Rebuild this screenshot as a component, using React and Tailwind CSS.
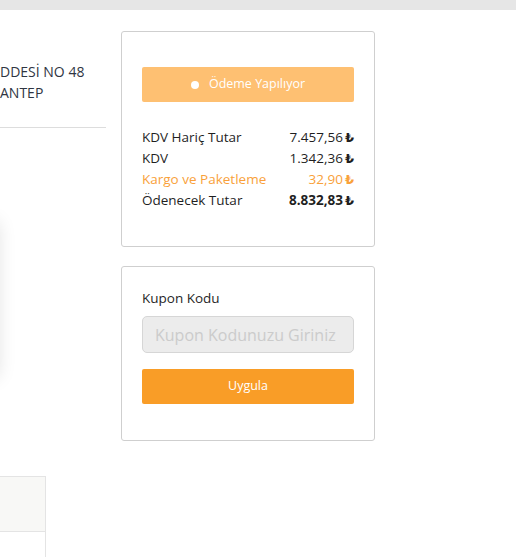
import React from 'react';

const rows = [
  { label: 'KDV Hariç Tutar', value: '7.457,56' },
  { label: 'KDV', value: '1.342,36' },
  { label: 'Kargo ve Paketleme', value: '32,90', accent: true },
  { label: 'Ödenecek Tutar', value: '8.832,83', strong: true },
];

export default function App() {
  return (
    <div className="w-[516px] h-[557px] overflow-hidden bg-white font-['Open_Sans',sans-serif] text-[#333]">
      <div className="h-[10px] bg-[#e6e6e6]" />
      <div className="flex">
        {/* left column (cut off) */}
        <div className="w-[106px] shrink-0 flex flex-col">
          <div className="pt-[51px] text-[14px] leading-[21px] text-[#2f3542] whitespace-nowrap">
            <div>DDESİ NO 48</div>
            <div>ANTEP</div>
          </div>
          <div className="mt-[24px] h-px bg-[#dddddd]" />
          <div className="mt-[94px] h-[155px] w-[200px] -ml-[203px] bg-white shadow-[0_0_18px_rgba(0,0,0,0.14)]" />
          <div className="mt-[99px] w-[46px] border-t border-r border-[#e4e4e4]">
            <div className="h-[55px] bg-[#f8f8f6] border-b border-[#e4e4e4]" />
            <div className="h-[30px]" />
          </div>
        </div>

        <div className="ml-[15px] w-[254px] shrink-0 flex flex-col gap-[19px] pt-[21px]">
          {/* summary */}
          <div className="h-[216px] border border-[#cfcfcf] rounded-[3px] px-[20px] pt-[35px]">
            <button className="w-full h-[35px] rounded-[2px] bg-[#fec072] text-white text-[12.5px] flex items-center justify-center gap-[10px]">
              <span className="w-[8px] h-[8px] rounded-full bg-white" />
              Ödeme Yapılıyor
            </button>
            <div className="mt-[25px] text-[13.5px] leading-[21px]">
              {rows.map((r) => (
                <div key={r.label} className={`h-[21px] flex items-center justify-between ${r.accent ? 'text-[#f9a13a]' : 'text-[#1f1f1f]'}`}>
                  <span>{r.label}</span>
                  <span className={`flex items-center ${r.strong ? 'font-bold' : ''}`}>
                    {r.value}
                    <span className="ml-[2px] font-bold font-['DejaVu_Sans',sans-serif] text-[13px] leading-none">₺</span>
                  </span>
                </div>
              ))}
            </div>
          </div>

          {/* coupon */}
          <div className="h-[175px] border border-[#cfcfcf] rounded-[3px] px-[20px] pt-[21px]">
            <div className="text-[13.5px] leading-[21px] text-[#1f1f1f]">Kupon Kodu</div>
            <input
              type="text"
              placeholder="Kupon Kodunuzu Giriniz"
              className="mt-[7px] w-full h-[37px] rounded-[5px] border border-[#d6d6d6] bg-[#ececec] px-[12px] text-[16px] outline-none placeholder:text-[#cbcbcb]"
            />
            <button className="mt-[16px] w-full h-[35px] rounded-[2px] bg-[#f99d27] text-white text-[12.5px]">
              Uygula
            </button>
          </div>
        </div>
      </div>
    </div>
  );
}
